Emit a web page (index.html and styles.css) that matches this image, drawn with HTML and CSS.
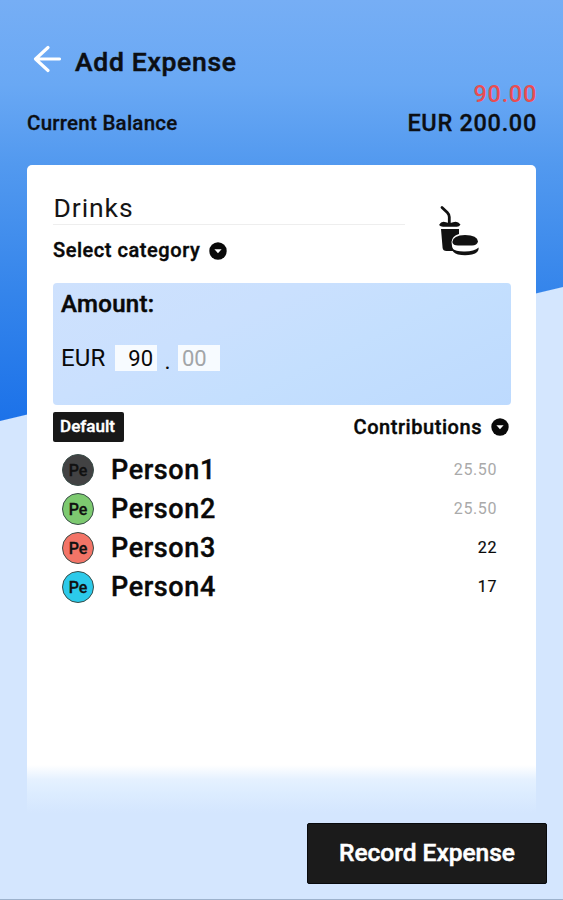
FILE: index.html
```html
<!DOCTYPE html>
<html lang="en">
<head>
<meta charset="utf-8">
<title>Add Expense</title>
<link rel="stylesheet" href="styles.css">
</head>
<body>
<main class="screen">
  <header class="title-bar">
    <svg class="back" viewBox="0 0 28 28" width="28" height="28"><path d="M15 2.500 2.500 14 15 25.500M3 14H26.500"/></svg>
    <h1 class="title">Add Expense</h1>
  </header>
  <div class="pending">90.00</div>
  <div class="balance">
    <span class="balance-label">Current Balance</span>
    <span class="balance-value">EUR 200.00</span>
  </div>
  <section class="card">
    <div class="details">
      <div class="fields">
        <div class="name">Drinks</div>
        <div class="category"><span class="category-label">Select category</span>
          <svg class="drop" viewBox="0 0 18 18" width="18" height="18"><circle cx="9" cy="9" r="8.700"/><path d="M5.400 7.200h7.200L9 11.300z"/></svg>
        </div>
      </div>
      <svg class="food" viewBox="0 0 42 52" width="42" height="52">
        <path class="straw" d="M3 2.500 8.300 7.500Q10.300 9.500 10.300 12V18"/>
        <path d="M0 20Q2.500 15.500 7 17.300q3.500 1.400 7 0Q18.500 15.500 21.500 19.500 20 22.200 17 21.700H5Q2 22.200 0 20z"/>
        <path d="M2 24h18v5q-7 2-7.500 8 0 5 2.500 9H7.500Q4 46 3.600 43z"/>
        <path d="M13.300 37Q14 30.300 26 30 38.500 30.300 39 36.500 38 40.500 33 40.500H19Q14 40.500 13.300 37z"/>
        <path d="M13 43.500Q17 46.800 26 46.500 35 46.500 39.700 42.500 40 48 33 49.500 26 51 19 49.500 13.500 48 13 43.500z"/>
      </svg>
    </div>
    <div class="amount">
      <div class="amount-label">Amount:</div>
      <div class="amount-row">
        <span class="currency">EUR</span>
        <span class="box whole">90</span>
        <span class="dot">.</span>
        <span class="box cents">00</span>
      </div>
    </div>
    <div class="split">
      <span class="default">Default</span>
      <span class="contrib"><span class="contrib-label">Contributions</span>
        <svg class="drop" viewBox="0 0 18 18" width="18" height="18"><circle cx="9" cy="9" r="8.700"/><path d="M5.400 7.200h7.200L9 11.300z"/></svg>
      </span>
    </div>
    <ul class="people">
      <li class="person"><span class="avatar dark">Pe</span><span class="person-name">Person1</span><span class="share muted">25.50</span></li>
      <li class="person"><span class="avatar green">Pe</span><span class="person-name">Person2</span><span class="share muted">25.50</span></li>
      <li class="person"><span class="avatar red">Pe</span><span class="person-name">Person3</span><span class="share">22</span></li>
      <li class="person"><span class="avatar cyan">Pe</span><span class="person-name">Person4</span><span class="share">17</span></li>
    </ul>
  </section>
  <div class="fade"></div>
  <button class="record"><span>Record Expense</span></button>
</main>
</body>
</html>
```
FILE: styles.css
```css
* { box-sizing: border-box; }
body { margin: 0; font-family: Roboto, sans-serif; color: #0c0f14; }
.screen {
  width: 563px; height: 900px; padding: 44px 26px 0 27px; overflow: hidden;
  display: flex; flex-direction: column;
  border-bottom: 1px solid #9db2cc;
  background:
    linear-gradient(to bottom right, transparent 49.8%, #d4e6fe 50.2%) 0 287px / 563px 134px no-repeat,
    linear-gradient(#d4e6fe, #d4e6fe) 0 421px / 100% 479px no-repeat,
    linear-gradient(#76aef5 0, #69a8f4 85px, #5299ef 165px, #3585eb 290px, #1c72e9 421px);
}
.title-bar { display: flex; height: 36px; padding-left: 6px; gap: 14px; }
.back { margin-top: 1px; fill: none; stroke: #fff; stroke-width: 3.1; stroke-linecap: round; stroke-linejoin: round; }
.title { margin: 0; font-size: 26.5px; font-weight: 500; line-height: 36px; letter-spacing: .7px; -webkit-text-stroke: .5px; }
.pending { height: 28px; line-height: 28px; text-align: right; font-size: 23.5px; font-weight: 500; letter-spacing: .7px; color: #ea4d51; }
.balance { height: 57px; display: flex; justify-content: space-between; line-height: 31px; }
.balance-label { font-size: 20.5px; font-weight: 500; letter-spacing: .25px; -webkit-text-stroke: .3px; }
.balance-value { font-size: 23.5px; font-weight: 500; letter-spacing: .7px; -webkit-text-stroke: .3px; }
.card { width: 509px; height: 600px; flex: none; padding: 24px 25px 0 26px; background: #fff; border-radius: 5px 5px 0 0; color: #090909; }
.details { display: flex; height: 93.5px; justify-content: space-between; }
.fields { width: 352px; }
.name { height: 36px; line-height: 38px; font-size: 26.5px; letter-spacing: .9px; padding-left: .5px; color: #151515; border-bottom: 1px solid #eee; }
.category { display: flex; gap: 9px; align-items: center; height: 51px; }
.category-label, .contrib-label { font-size: 20px; font-weight: 500; letter-spacing: .55px; -webkit-text-stroke: .4px; }
.category-label { line-height: 25px; }
.drop { fill: #090909; }
.drop path { fill: #fff; }
.food { margin: 16px 30px 0 0; fill: #111; }
.food .straw { fill: none; stroke: #111; stroke-width: 2.8; stroke-linecap: round; }
.amount { height: 122.5px; padding: 4px 8px; border-radius: 4px; background: linear-gradient(155deg, #cee1fd 0, #cae0fe 35%, #c4dffe 60%, #bddafe 100%); }
.amount-label { font-size: 24px; font-weight: 500; line-height: 35px; letter-spacing: .3px; -webkit-text-stroke: .5px; }
.amount-row { display: flex; margin-top: 23px; height: 26px; line-height: 27px; }
.currency { width: 54px; font-size: 24px; letter-spacing: .2px; }
.box { width: 42px; background: #f7fbff; }
.whole { text-align: right; padding-right: 4px; font-size: 22px; }
.dot { width: 21px; text-align: center; line-height: 34px; font-size: 23px; }
.cents { padding-left: 4px; font-size: 22px; color: #a2a5a8; }
.split { height: 45px; display: flex; justify-content: space-between; padding: 7px 2px 0 0; }
.default { width: 71px; height: 30px; padding-right: 2px; background: #181818; border-radius: 2px; color: #fff; text-align: center; font-size: 17px; font-weight: 500; line-height: 29px; -webkit-text-stroke: .4px; }
.contrib { display: flex; gap: 9px; align-items: center; height: 30px; }
.people { list-style: none; margin: 0; padding: 0 14px 0 9px; }
.person { display: flex; align-items: center; height: 39px; }
.avatar { width: 32px; height: 32px; border: 1px solid #394c48; border-radius: 50%; text-align: center; font-size: 16px; font-weight: 500; line-height: 31px; color: #111; -webkit-text-stroke: .3px; }
.dark { background: #424243; }
.green { background: #7dca70; }
.red { background: #f37467; }
.cyan { background: #2ccaea; }
.person-name { flex: 1; margin-left: 17px; font-size: 27px; font-weight: 500; letter-spacing: .6px; -webkit-text-stroke: .4px; }
.share { font-size: 16px; letter-spacing: .6px; -webkit-text-stroke: .2px; }
.muted { color: #aaa; -webkit-text-stroke: 0; }
.fade { width: 509px; height: 48px; flex: none; background: linear-gradient(#fff 0, #e5f1ff 30%, #dcecff 60%, #d4e6fe 100%); }
.record { align-self: flex-end; flex: none; width: 240px; height: 61px; margin: 10px -10px 0 0; padding: 0 0 2px; border: 1px solid #080a0d; border-radius: 2px; background: #1b1b1b; color: #fff; font: 500 24.5px/57px Roboto, sans-serif; -webkit-text-stroke: .5px; }
```
